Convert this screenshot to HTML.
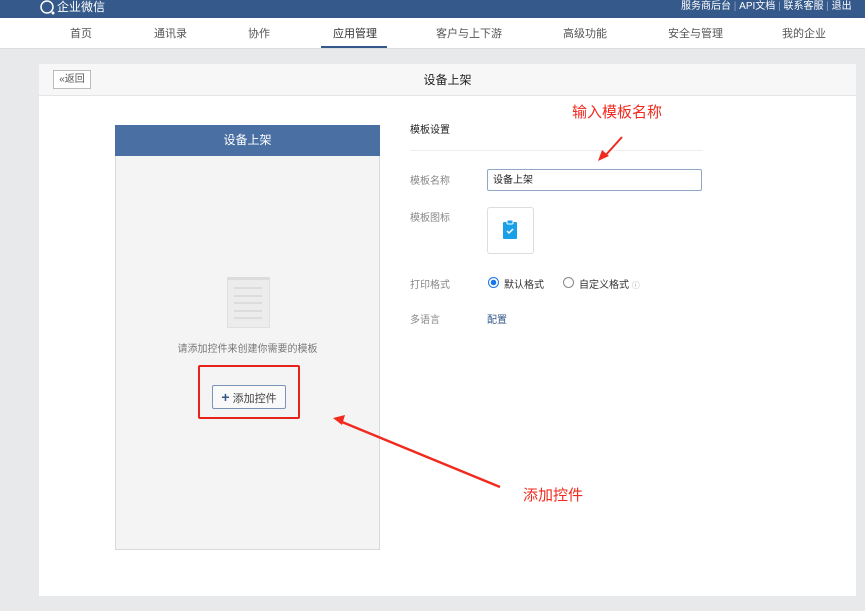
<!DOCTYPE html>
<html><head><meta charset="utf-8"><style>
*{margin:0;padding:0;box-sizing:border-box}
body{width:865px;height:611px;overflow:hidden;background:#e8e9eb;font-family:"Liberation Sans","Noto Sans CJK SC",sans-serif;font-size:11px;color:#333;position:relative}
.a{position:absolute}
</style></head><body>
<div class="a" style="left:0;top:0;width:865px;height:18px;background:#35598a"></div>
<svg class="a" style="left:39px;top:0" width="18" height="16"><circle cx="8" cy="7" r="6" fill="none" stroke="#fff" stroke-width="1.5"/><circle cx="14" cy="13" r="1.5" fill="#fff"/></svg>
<div class="a" style="left:57px;top:0;color:#fff;font-size:12px;line-height:14px">企业微信</div>
<div class="a" style="left:681px;top:1px;color:#fff;font-size:10px;line-height:12px;white-space:nowrap">服务商后台 <span style="color:#8ea6c6">|</span> API文档 <span style="color:#8ea6c6">|</span> 联系客服 <span style="color:#8ea6c6">|</span> 退出</div>
<div class="a" style="left:0;top:18px;width:865px;height:31px;background:#fff;border-bottom:1px solid #dcdde0"></div>
<div class="a" style="top:27px;left:0;width:865px;font-size:11px;color:#555;line-height:14px">
<span class="a" style="left:70px">首页</span><span class="a" style="left:154px">通讯录</span><span class="a" style="left:248px">协作</span><span class="a" style="left:333px;color:#333">应用管理</span><span class="a" style="left:436px">客户与上下游</span><span class="a" style="left:563px">高级功能</span><span class="a" style="left:668px">安全与管理</span><span class="a" style="left:782px">我的企业</span></div>
<div class="a" style="left:321px;top:46px;width:66px;height:2px;background:#35598a"></div>
<div class="a" style="left:39px;top:64px;width:817px;height:532px;background:#fff"></div>
<div class="a" style="left:39px;top:64px;width:817px;height:32px;background:#f7f7f7;border-bottom:1px solid #e4e4e4"></div>
<div class="a" style="left:53px;top:70px;width:38px;height:19px;border:1px solid #bbb;background:#fff;font-size:10px;line-height:17px;text-align:center;color:#555;white-space:nowrap">«返回</div>
<div class="a" style="left:0;width:895px;top:73px;text-align:center;font-size:12px;line-height:14px;color:#222">设备上架</div>
<div class="a" style="left:115px;top:125px;width:265px;height:425px;background:#f4f4f4;border:1px solid #d9d9d9"></div>
<div class="a" style="left:115px;top:125px;width:265px;height:31px;background:#4a6fa3;color:#fff;font-size:12px;line-height:31px;text-align:center">设备上架</div>
<div class="a" style="left:227px;top:277px;width:43px;height:51px;background:#ececec;border:1px solid #e0e0e0;border-top:3px solid #dcdcdc"></div>
<div class="a" style="left:234px;top:287px;width:28px;height:2px;background:#dcdcdc;box-shadow:0 8px 0 #dcdcdc,0 15px 0 #dcdcdc,0 23px 0 #dcdcdc,0 30px 0 #dcdcdc"></div>
<div class="a" style="left:115px;width:265px;top:344px;text-align:center;font-size:10px;color:#777;line-height:12px">请添加控件来创建你需要的模板</div>
<div class="a" style="left:198px;top:365px;width:102px;height:54px;border:2px solid #e8231c;border-radius:2px"></div>
<div class="a" style="left:212px;top:385px;width:74px;height:24px;border:1px solid #7a93b8;border-radius:2px;background:#f9f9f9;font-size:11px;line-height:22px;text-align:center;color:#444"><b style="color:#35598a;font-size:14px">+</b> 添加控件</div>
<div class="a" style="left:410px;top:125px;font-size:10px;color:#222;line-height:12px">模板设置</div>
<div class="a" style="left:410px;top:150px;width:293px;height:1px;background:#eee"></div>
<div class="a" style="left:410px;top:172px;font-size:10px;color:#888">模板名称</div>
<div class="a" style="left:487px;top:169px;width:215px;height:22px;border:1px solid #90a8c8;border-radius:2px;font-size:10px;line-height:22px;padding-left:5px;color:#222">设备上架</div>
<div class="a" style="left:410px;top:209px;font-size:10px;color:#888">模板图标</div>
<div class="a" style="left:487px;top:207px;width:47px;height:47px;border:1px solid #ddd;border-radius:3px"></div>
<svg class="a" style="left:501px;top:219px" width="18" height="22"><rect x="2" y="3" width="14" height="17" rx="1" fill="#1aa0e8"/><rect x="6" y="1" width="6" height="4" rx="1" fill="#1aa0e8" stroke="#fff"/><path d="M6 12l2 2 4-4" stroke="#fff" stroke-width="1.5" fill="none"/></svg>
<div class="a" style="left:410px;top:276px;font-size:10px;color:#888">打印格式</div>
<div class="a" style="left:488px;top:277px;width:11px;height:11px;border-radius:50%;border:1px solid #1a73e8;background:radial-gradient(#1a73e8 2.5px,#fff 3px)"></div>
<div class="a" style="left:504px;top:276px;font-size:10px">默认格式</div>
<div class="a" style="left:563px;top:277px;width:11px;height:11px;border-radius:50%;border:1px solid #888"></div>
<div class="a" style="left:579px;top:276px;font-size:10px">自定义格式 <span style="color:#aaa;font-size:8px">ⓘ</span></div>
<div class="a" style="left:410px;top:311px;font-size:10px;color:#888">多语言</div>
<div class="a" style="left:487px;top:311px;font-size:10px;color:#35598a">配置</div>
<div class="a" style="left:572px;top:103px;font-size:15px;color:#f02a1e;line-height:20px">输入模板名称</div>
<div class="a" style="left:523px;top:486px;font-size:15px;color:#f02a1e;line-height:20px">添加控件</div>
<svg class="a" style="left:0;top:0" width="865" height="611"><path d="M622 137L604 157" stroke="#f02a1e" stroke-width="2"/><path d="M598 161l4-11 7 6z" fill="#f02a1e"/><path d="M500 487L342 422" stroke="#f02a1e" stroke-width="2.5"/><path d="M333 418l12-3-3 10z" fill="#f02a1e"/></svg>
</body></html>
